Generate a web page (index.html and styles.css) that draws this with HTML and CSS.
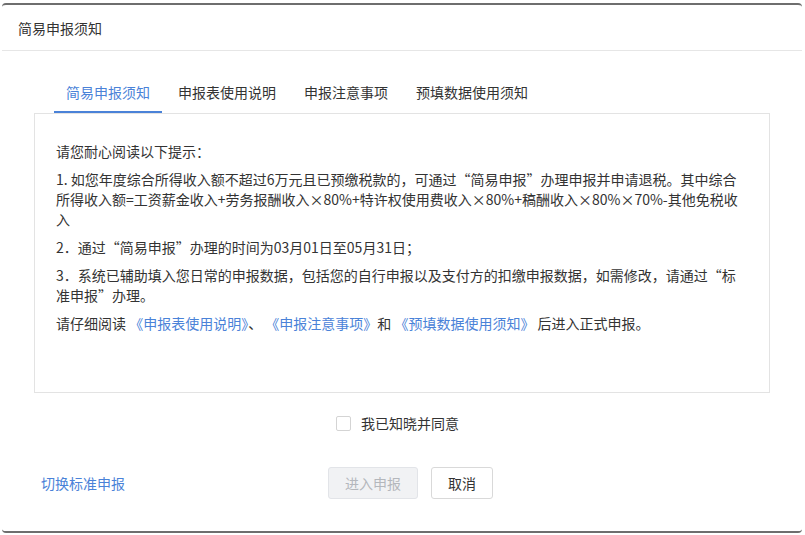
FILE: index.html
```html
<!DOCTYPE html>
<html lang="zh-CN">
<head>
<meta charset="utf-8">
<title>简易申报须知</title>
<link rel="stylesheet" href="styles.css">
</head>
<body>
<div class="dialog">
  <div class="dialog-header">简易申报须知</div>
  <div class="dialog-body">
    <div class="tabs">
      <div class="tab active">简易申报须知</div>
      <div class="tab">申报表使用说明</div>
      <div class="tab">申报注意事项</div>
      <div class="tab">预填数据使用须知</div>
    </div>
    <div class="notice">
      <p>请您耐心阅读以下提示：</p>
      <p>1. 如您年度综合所得收入额不超过6万元且已预缴税款的，可通过“简易申报”办理申报并申请退税。其中综合所得收入额=工资薪金收入+劳务报酬收入×80%+特许权使用费收入×80%+稿酬收入×80%×70%-其他免税收入</p>
      <p>2．通过“简易申报”办理的时间为03月01日至05月31日；</p>
      <p>3．系统已辅助填入您日常的申报数据，包括您的自行申报以及支付方的扣缴申报数据，如需修改，请通过“标准申报”办理。</p>
      <p>请仔细阅读 <a class="doc-link">《申报表使用说明》</a>、 <a class="doc-link">《申报注意事项》</a>和 <a class="doc-link">《预填数据使用须知》</a> 后进入正式申报。</p>
    </div>
    <label class="agree">
      <span class="checkbox"></span>
      <span class="agree-text">我已知晓并同意</span>
    </label>
    <div class="footer">
      <a class="switch-link">切换标准申报</a>
      <div class="actions">
        <button class="btn btn-disabled">进入申报</button>
        <button class="btn">取消</button>
      </div>
    </div>
  </div>
</div>
</body>
</html>
```
FILE: styles.css
```css
* { box-sizing: border-box; }
html, body {
  margin: 0;
  padding: 0;
  background: #ffffff;
}
body {
  font-family: "Noto Sans CJK SC", "Microsoft YaHei", sans-serif;
  font-size: 14px;
  color: #333333;
  width: 805px;
  height: 535px;
  overflow: hidden;
}
.dialog {
  margin: 3px 0 0 2px;
  width: 800px;
  height: 530px;
  border-top: 2px solid #6e6e6e;
  border-bottom: 2px solid #6e6e6e;
  border-radius: 4px;
  background: #ffffff;
  display: flex;
  flex-direction: column;
}
.dialog-header {
  height: 46px;
  padding-left: 16px;
  display: flex;
  align-items: center;
  border-bottom: 1px solid #e6e6e6;
  font-size: 14px;
  color: #333;
}
.dialog-body {
  padding: 0 32px;
  display: flex;
  flex-direction: column;
}
.tabs {
  display: flex;
  gap: 4px;
  margin-top: 23px;
  padding-left: 20px;
}
.tab {
  height: 39px;
  line-height: 37px;
  padding: 0 12px;
  border-bottom: 2px solid transparent;
  color: #333;
  white-space: nowrap;
}
.tab.active {
  color: #4a82d8;
  border-bottom-color: #4a82d8;
}
.notice {
  height: 280px;
  border: 1px solid #e3e3e3;
  padding: 27px 20px 0 21px;
}
.notice p {
  margin: 0 0 8px;
  line-height: 20px;
}
.doc-link {
  color: #4a82d8;
  cursor: pointer;
}
.agree {
  display: flex;
  align-items: center;
  justify-content: center;
  gap: 10px;
  height: 30px;
  margin-top: 15px;
  padding-right: 9px;
}
.checkbox {
  width: 15px;
  height: 15px;
  border: 1px solid #d4d4d4;
  border-radius: 2px;
  background: #fff;
}
.footer {
  display: flex;
  align-items: center;
  margin-top: 29px;
  padding-left: 7px;
}
.switch-link {
  color: #4a82d8;
  cursor: pointer;
  width: 84px;
  white-space: nowrap;
}
.actions {
  display: flex;
  gap: 13px;
  margin-left: 203px;
}
.btn {
  height: 32px;
  padding: 0 16px;
  border: 1px solid #d9d9d9;
  border-radius: 3px;
  background: #fff;
  font-family: inherit;
  font-size: 14px;
  color: #333;
}
.btn-disabled {
  background: #f1f2f4;
  border-color: #e2e4e8;
  color: #b4b7bc;
}
```
